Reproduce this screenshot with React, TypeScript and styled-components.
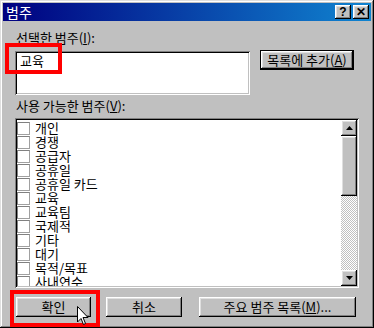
import React from "react";
import styled, { createGlobalStyle } from "styled-components";

const GlobalStyle = createGlobalStyle`
  html, body { margin: 0; padding: 0; background: #c0c0c0; }
  body {
    font-family: "Noto Sans CJK KR", "Noto Sans", sans-serif;
    font-size: 13px;
    color: #000;
  }
  * { box-sizing: border-box; }
`;

const raised = `
  box-shadow: inset -1px -1px 0 #000, inset 1px 1px 0 #fff,
    inset -2px -2px 0 #808080, inset 2px 2px 0 #dfdfdf;
`;

const sunken = `
  box-shadow: inset 1px 1px 0 #808080, inset -1px -1px 0 #fff,
    inset 2px 2px 0 #000, inset -2px -2px 0 #c0c0c0;
`;

const Window = styled.div`
  position: relative;
  width: 374px;
  height: 328px;
  padding: 3px;
  background: #c0c0c0;
  box-shadow: inset -1px -1px 0 #000, inset 1px 1px 0 #dfdfdf,
    inset -2px -2px 0 #808080, inset 2px 2px 0 #fff;
  overflow: hidden;
`;

const TitleBar = styled.div`
  height: 18px;
  display: flex;
  align-items: center;
  padding: 0 2px 0 3px;
  background: linear-gradient(90deg, #000080 0%, #1084d0 100%);
  color: #fff;
`;

const Title = styled.span`
  flex: 1;
  font-size: 14px;
  line-height: 18px;
`;

const TitleButton = styled.button<{ $gap?: number }>`
  width: 16px;
  height: 14px;
  margin-left: ${(p) => p.$gap ?? 0}px;
  padding: 0;
  border: 0;
  background: #c0c0c0;
  ${raised}
  font-family: "Liberation Sans", sans-serif;
  font-weight: bold;
  font-size: 12px;
  line-height: 13px;
  color: #000;
`;

const Body = styled.div`
  display: flex;
  flex-direction: column;
  padding: 10px 12px 0 12px;
`;

const Label = styled.div<{ $top?: number }>`
  margin-top: ${(p) => p.$top ?? 0}px;
  padding-left: 1px;
  height: 14px;
  line-height: 14px;
`;

const U = styled.span`
  text-decoration: underline;
`;

const Row = styled.div`
  display: flex;
  align-items: flex-start;
  margin-top: 6px;
`;

const TextBox = styled.div`
  width: 235px;
  height: 44px;
  background: #fff;
  ${sunken}
  padding: 3px 5px;
  line-height: 14px;
`;

const Button = styled.button<{ $w: number; $left?: number; $def?: boolean }>`
  width: ${(p) => p.$w}px;
  height: 20px;
  margin-left: ${(p) => p.$left ?? 0}px;
  padding: 0;
  border: 0;
  background: #c0c0c0;
  font-family: inherit;
  font-size: 13px;
  line-height: 14px;
  color: #000;
  ${(p) =>
    p.$def
      ? `box-shadow: inset 0 0 0 1px #000, inset -2px -2px 0 #000, inset 2px 2px 0 #fff,
    inset -3px -3px 0 #808080, inset 3px 3px 0 #dfdfdf;`
      : raised}
`;

const ListBox = styled.div`
  display: flex;
  width: 344px;
  height: 170px;
  margin-top: 5px;
  padding: 2px;
  background: #fff;
  ${sunken}
`;

const Items = styled.div`
  flex: 1;
  overflow: hidden;
  padding-top: 1px;
`;

const Item = styled.div`
  display: flex;
  align-items: center;
  height: 14px;
  line-height: 14px;
  white-space: nowrap;
`;

const Check = styled.span`
  flex: none;
  width: 13px;
  height: 13px;
  margin-right: 5px;
  border-top: 1px solid #808080;
  border-left: 1px solid #808080;
  border-right: 1px solid #a0a0a0;
  border-bottom: 1px solid #a0a0a0;
  background: #fff;
`;

const ScrollBar = styled.div`
  width: 16px;
  display: flex;
  flex-direction: column;
  background: repeating-conic-gradient(#c0c0c0 0 25%, #fff 0 50%) 0 0 / 2px 2px;
`;

const Arrow = styled.div`
  height: 16px;
  display: flex;
  align-items: center;
  justify-content: center;
  background: #c0c0c0;
  ${raised}
`;

const Thumb = styled.div`
  height: 60px;
  background: #c0c0c0;
  ${raised}
`;

const Track = styled.div`
  flex: 1;
`;

const ButtonRow = styled.div`
  display: flex;
  margin-top: 9px;
`;

const Marker = styled.div<{ $x: number; $y: number; $w: number; $h: number }>`
  position: absolute;
  left: ${(p) => p.$x}px;
  top: ${(p) => p.$y}px;
  width: ${(p) => p.$w}px;
  height: ${(p) => p.$h}px;
  border: 4px solid #ff0000;
  pointer-events: none;
`;

const Cursor = styled.svg`
  position: absolute;
  left: 77px;
  top: 306px;
`;

const items = [
  "개인",
  "경쟁",
  "공급자",
  "공휴일",
  "공휴일 카드",
  "교육",
  "교육팀",
  "국제적",
  "기타",
  "대기",
  "목적/목표",
  "사내연수",
];

export default function App() {
  return (
    <>
      <GlobalStyle />
      <Window>
        <TitleBar>
          <Title>범주</Title>
          <TitleButton>?</TitleButton>
          <TitleButton $gap={2}>✕</TitleButton>
        </TitleBar>
        <Body>
          <Label>
            선택한 범주(<U>I</U>):
          </Label>
          <Row>
            <TextBox>교육</TextBox>
            <Button $w={94} $left={10} $def style={{ marginTop: -1 }}>
              목록에 추가(<U>A</U>)
            </Button>
          </Row>
          <Label $top={4}>
            사용 가능한 범주(<U>V</U>):
          </Label>
          <ListBox>
            <Items>
              {items.map((t) => (
                <Item key={t}>
                  <Check />
                  {t}
                </Item>
              ))}
            </Items>
            <ScrollBar>
              <Arrow>
                <svg width="7" height="4" viewBox="0 0 7 4">
                  <path d="M3.5 0 L7 4 L0 4 Z" fill="#000" />
                </svg>
              </Arrow>
              <Thumb />
              <Track />
              <Arrow>
                <svg width="7" height="4" viewBox="0 0 7 4">
                  <path d="M0 0 L7 0 L3.5 4 Z" fill="#000" />
                </svg>
              </Arrow>
            </ScrollBar>
          </ListBox>
          <ButtonRow>
            <Button $w={75} $left={1}>
              확인
            </Button>
            <Button $w={76} $left={15}>
              취소
            </Button>
            <Button $w={157} $left={17}>
              주요 범주 목록(<U>M</U>)...
            </Button>
          </ButtonRow>
        </Body>
        <Marker $x={5} $y={43} $w={57} $h={31} />
        <Marker $x={10} $y={290} $w={90} $h={37} />
        <Cursor width="12" height="20" viewBox="0 0 12 20">
          <path
            d="M0.5 0.5 L0.5 16 L4 12.5 L6.5 18.5 L8.5 17.5 L6 11.5 L11 11.5 Z"
            fill="#fff"
            stroke="#000"
            strokeWidth="1"
          />
        </Cursor>
      </Window>
    </>
  );
}
